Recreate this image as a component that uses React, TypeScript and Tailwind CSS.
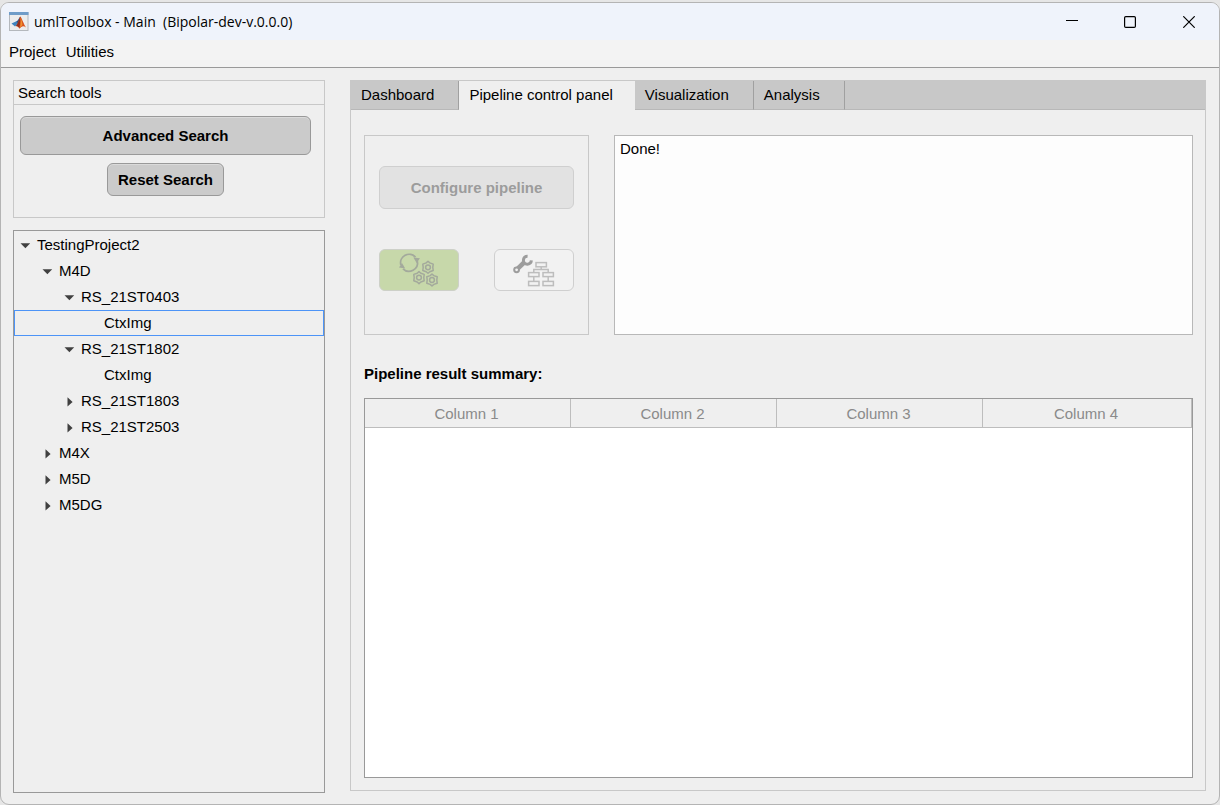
import React from "react";

type TreeNode = {
  label: string;
  open?: boolean;
  selected?: boolean;
  children?: TreeNode[];
};

const tree: TreeNode[] = [
  {
    label: "TestingProject2",
    open: true,
    children: [
      {
        label: "M4D",
        open: true,
        children: [
          { label: "RS_21ST0403", open: true, children: [{ label: "CtxImg", selected: true }] },
          { label: "RS_21ST1802", open: true, children: [{ label: "CtxImg" }] },
          { label: "RS_21ST1803", children: [] },
          { label: "RS_21ST2503", children: [] },
        ],
      },
      { label: "M4X", children: [] },
      { label: "M5D", children: [] },
      { label: "M5DG", children: [] },
    ],
  },
];

const indents = ["pl-[5px]", "pl-[27px]", "pl-[49px]", "pl-[72px]"];
const tabs = ["Dashboard", "Pipeline control panel", "Visualization", "Analysis"];
const columns = ["Column 1", "Column 2", "Column 3", "Column 4"];

function AppLogo() {
  return (
    <svg width="20" height="20" viewBox="0 0 20 20" aria-hidden="true">
      <rect x="0.5" y="0.5" width="18.5" height="18" fill="#ececec" stroke="#b4b8bd" />
      <rect x="0" y="0" width="19.5" height="3" fill="#6f9cc8" />
      <path d="M2.5 11.6 L7.4 9.2 L9.4 11.6 L6 14.6 Z" fill="#3f83bd" />
      <path d="M7.2 9.4 C9 9 9.8 6.5 11.2 4.5 L9.4 12 Z" fill="#27508a" />
      <path d="M11.2 4.5 C13 6 14.5 12 17 15.4 C14.5 13.4 12.5 13.8 10.5 16.8 C9.8 15.4 9 13.8 6.8 14.2 C9.2 11.6 10 7.5 11.2 4.5 Z" fill="#d9541e" />
      <path d="M11.2 4.5 C11.5 8 11.2 12 10.2 16.2 C9.6 15 8.8 13.8 6.8 14.2 C9.2 11.6 10 7.5 11.2 4.5 Z" fill="#93301c" />
      <path d="M11.4 5.4 C12.8 8 13.2 10.5 13.4 13 L11 15.4 C11.8 12 11.9 8 11.4 5.4 Z" fill="#f0932f" />
    </svg>
  );
}

function Gear({ x, y }: { x: number; y: number }) {
  return (
    <g transform={`translate(${x} ${y})`}>
      <path
        d="M0 -6 L1.8 -4.4 L5.2 -3.2 L4.8 0 L5.2 3.2 L1.8 4.4 L0 6 L-1.8 4.4 L-5.2 3.2 L-4.8 0 L-5.2 -3.2 L-1.8 -4.4 Z"
        strokeLinejoin="round"
      />
      <circle r="2.4" />
    </g>
  );
}

function RunIcon() {
  return (
    <svg width="40" height="34" viewBox="0 0 40 34" fill="none" stroke="#a3a99c" strokeWidth="1.5" aria-hidden="true">
      <path d="M1.9 12 A8.5 8.5 0 0 1 16.5 4.2" strokeWidth="1.8" />
      <path d="M18.3 8 A8.5 8.5 0 0 1 4 15.8" strokeWidth="1.8" />
      <path d="M14.4 4.6 L21 5.2 L17.6 10 Z" fill="#a3a99c" stroke="none" />
      <path d="M0 14.6 L6.2 15.4 L3 10 Z" fill="#a3a99c" stroke="none" />
      <Gear x={29} y={14.3} />
      <Gear x={20} y={24.6} />
      <Gear x={33} y={27} />
    </svg>
  );
}

function WorkflowIcon() {
  return (
    <svg width="42" height="34" viewBox="0 0 42 34" fill="none" stroke="#bdbdbd" strokeWidth="1.5" aria-hidden="true">
      <g stroke="#9d9d9d">
        <path d="M5 15.4 L11.6 9" strokeWidth="4.6" />
        <path d="M14.6 3.2 A4 4 0 1 0 18.4 7.4" strokeWidth="3" />
        <circle cx="3.6" cy="16.8" r="2.4" strokeWidth="2" />
      </g>
      <rect x="23" y="9.6" width="10.4" height="4.2" />
      <rect x="15.6" y="19.6" width="10.4" height="4" />
      <rect x="30" y="19.6" width="10.4" height="4" />
      <rect x="15.6" y="28.4" width="10.4" height="4.2" />
      <rect x="30" y="28.4" width="10.4" height="4.2" />
      <path d="M28.2 13.8 V16.6 M20.8 19.6 V16.6 H35.2 V19.6 M20.8 23.6 V28.4 M35.2 23.6 V28.4" />
    </svg>
  );
}

function Arrow({ open }: { open?: boolean }) {
  return (
    <svg width="11" height="11" viewBox="0 0 11 11" fill="#404040" aria-hidden="true">
      {open ? <path d="M0.5 3.2 H10.2 L5.4 8.2 Z" /> : <path d="M3.5 1.2 V10.6 L8.6 5.9 Z" />}
    </svg>
  );
}

function Branch({ nodes, level }: { nodes: TreeNode[]; level: number }) {
  return (
    <ul role={level === 0 ? "tree" : "group"}>
      {nodes.map((node, i) => (
        <li key={i} role="treeitem" aria-expanded={node.children ? !!node.open : undefined} aria-selected={!!node.selected}>
          <button
            type="button"
            className={`flex h-[26px] w-full items-center gap-[6px] border text-left ${indents[level]} ${
              node.selected ? "border-[#4d94f7]" : "border-transparent"
            }`}
          >
            {node.children ? <Arrow open={node.open} /> : <span className="w-[11px]" />}
            {node.label}
          </button>
          {node.open && node.children && <Branch nodes={node.children} level={level + 1} />}
        </li>
      ))}
    </ul>
  );
}

export default function App() {
  return (
    <div className="flex min-h-screen flex-col bg-[#e6e6e6] pt-[2px] font-['Liberation_Sans',Arial,sans-serif] text-[15px] leading-[20px] text-black">
      <div className="flex flex-1 flex-col overflow-hidden rounded-[9px] border border-[#b4b4b4] bg-[#efefef]">
        <header className="flex h-[37px] items-center bg-[#eff3fb] pl-2">
          <AppLogo />
          <h1 className="ml-[5px] flex-1 whitespace-pre font-['Open_Sans','Noto_Sans',sans-serif] text-[14px]">
            {"umlToolbox - Main  (Bipolar-dev-v.0.0.0)"}
          </h1>
          <button type="button" aria-label="Minimize" className="flex h-full w-[58px] items-center justify-center">
            <svg width="12" height="12" viewBox="0 0 12 12" stroke="#000" fill="none">
              <path d="M0 4.5 H12" />
            </svg>
          </button>
          <button type="button" aria-label="Maximize" className="flex h-full w-[58px] items-center justify-center">
            <svg width="12" height="12" viewBox="0 0 12 12" stroke="#000" strokeWidth="1.2" fill="none">
              <rect x="0.6" y="0.6" width="10.8" height="10.8" rx="1.2" />
            </svg>
          </button>
          <button type="button" aria-label="Close" className="flex h-full w-[60px] items-center justify-center">
            <svg width="12" height="12" viewBox="0 0 12 12" stroke="#000" strokeWidth="1.2" fill="none">
              <path d="M0.3 0.3 L11.7 11.7 M11.7 0.3 L0.3 11.7" />
            </svg>
          </button>
        </header>

        <nav className="flex h-[28px] items-center gap-[10px] border-b border-[#999] bg-[#f3f3f3] pb-1 pl-2">
          <button type="button">Project</button>
          <button type="button">Utilities</button>
        </nav>

        <div className="flex flex-1 gap-[25px] pt-3 pr-[13px] pb-[11px] pl-3">
          <aside className="flex w-[312px] shrink-0 flex-col gap-3">
            <section className="h-[138px] border border-[#c8c8c8]">
              <h2 className="h-6 border-b border-[#c8c8c8] pt-[2px] pl-1">Search tools</h2>
              <div className="flex flex-col items-center gap-2 pt-[11px] pr-[13px] pl-[6px]">
                <button
                  type="button"
                  className="h-[39px] w-full rounded-[6px] border border-[#999] bg-[#cbcbcb] font-bold shadow-[inset_0_1px_0_#dadada]"
                >
                  Advanced Search
                </button>
                <button
                  type="button"
                  className="h-[33px] w-[117px] rounded-[6px] border border-[#999] bg-[#cbcbcb] font-bold whitespace-nowrap shadow-[inset_0_1px_0_#dadada]"
                >
                  Reset Search
                </button>
              </div>
            </section>
            <section aria-label="Projects" className="flex-1 border border-[#999] pt-px">
              <Branch nodes={tree} level={0} />
            </section>
          </aside>

          <main className="mb-[2px] flex min-w-0 flex-1 flex-col border border-[#c8c8c8]">
            <div role="tablist" className="flex h-[29px] bg-[#c8c8c8]">
              {tabs.map((tab, i) => (
                <button
                  key={tab}
                  type="button"
                  role="tab"
                  aria-selected={i === 1}
                  className={
                    i === 1
                      ? "border-b border-[#efefef] bg-[#efefef] pr-[22px] pl-[10px]"
                      : "border-r border-b border-r-[#a0a0a0] border-b-[#b8b8b8] pr-6 pl-[10px]"
                  }
                >
                  {tab}
                </button>
              ))}
              <div className="flex-1 border-b border-[#b8b8b8]" />
            </div>

            <div className="flex flex-1 flex-col pt-[25px] pr-3 pb-3 pl-[13px]">
              <div className="flex h-[200px] gap-[25px]">
                <section className="flex w-[225px] shrink-0 flex-col gap-10 border border-[#c8c8c8] px-[14px] pt-[30px]">
                  <button
                    type="button"
                    disabled
                    className="h-[43px] rounded-[6px] border border-[#cfcfcf] bg-[#e2e2e2] font-bold text-[#9c9c9c]"
                  >
                    Configure pipeline
                  </button>
                  <div className="flex justify-between">
                    <button
                      type="button"
                      disabled
                      aria-label="Run pipeline"
                      className="flex h-[42px] w-20 items-center justify-center rounded-[6px] border border-[#cdd0c8] bg-[#c7d8aa]"
                    >
                      <RunIcon />
                    </button>
                    <button
                      type="button"
                      disabled
                      aria-label="Edit workflow"
                      className="flex h-[42px] w-20 items-center justify-center rounded-[6px] border border-[#cfcfcf] bg-[#f2f2f2]"
                    >
                      <WorkflowIcon />
                    </button>
                  </div>
                </section>
                <textarea
                  aria-label="Pipeline messages"
                  readOnly
                  defaultValue="Done!"
                  className="min-w-0 flex-1 resize-none border border-[#b8b8b8] bg-[#fdfdfd] px-[5px] py-[3px] outline-none"
                />
              </div>

              <h2 className="mt-[29px] mb-[14px] font-bold">Pipeline result summary:</h2>

              <div className="flex-1 border border-[#999] bg-white">
                <table aria-label="Pipeline result summary" className="w-full table-fixed border-separate border-spacing-0">
                  <colgroup>
                    <col className="w-[206px]" />
                    <col className="w-[206px]" />
                    <col className="w-[206px]" />
                    <col />
                  </colgroup>
                  <thead>
                    <tr>
                      {columns.map((column) => (
                        <th
                          key={column}
                          scope="col"
                          className="h-[29px] border-r border-b border-[#bdbdbd] bg-[#efefef] pt-[2px] pr-[2px] pb-0 pl-0 font-normal text-[#8a8a8a]"
                        >
                          {column}
                        </th>
                      ))}
                    </tr>
                  </thead>
                </table>
              </div>
            </div>
          </main>
        </div>
      </div>
    </div>
  );
}
